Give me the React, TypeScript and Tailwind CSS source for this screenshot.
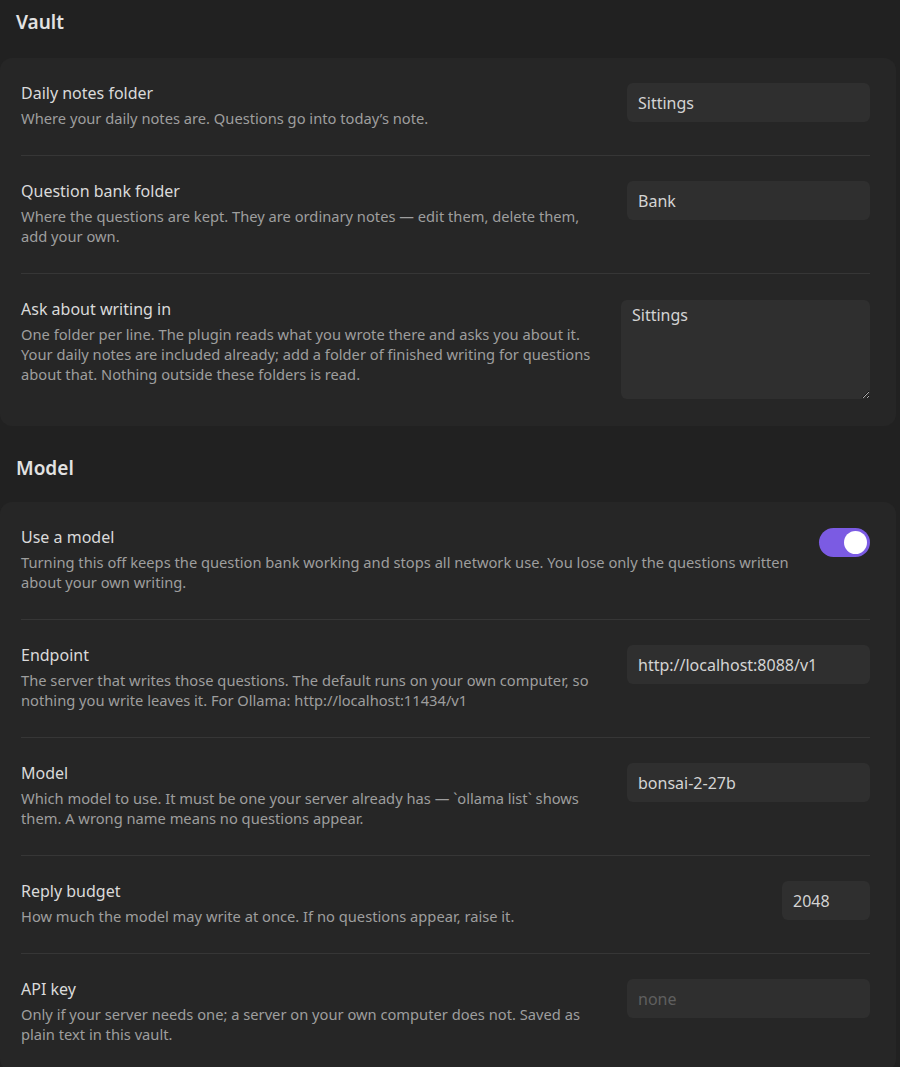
import React from 'react';

type Control =
  | { kind: 'text'; value?: string; placeholder?: string; width: string }
  | { kind: 'area'; value: string }
  | { kind: 'toggle'; on: boolean };

type Setting = {
  name: string;
  desc: string[];
  control: Control;
};

const sections: { title: string; items: Setting[] }[] = [
  {
    title: 'Vault',
    items: [
      {
        name: 'Daily notes folder',
        desc: ["Where your daily notes are. Questions go into today\u2019s note."],
        control: { kind: 'text', value: 'Sittings', width: 'w-[243px]' },
      },
      {
        name: 'Question bank folder',
        desc: [
          'Where the questions are kept. They are ordinary notes \u2014 edit them, delete them,',
          'add your own.',
        ],
        control: { kind: 'text', value: 'Bank', width: 'w-[243px]' },
      },
      {
        name: 'Ask about writing in',
        desc: [
          'One folder per line. The plugin reads what you wrote there and asks you about it.',
          'Your daily notes are included already; add a folder of finished writing for questions',
          'about that. Nothing outside these folders is read.',
        ],
        control: { kind: 'area', value: 'Sittings' },
      },
    ],
  },
  {
    title: 'Model',
    items: [
      {
        name: 'Use a model',
        desc: [
          'Turning this off keeps the question bank working and stops all network use. You lose only the questions written',
          'about your own writing.',
        ],
        control: { kind: 'toggle', on: true },
      },
      {
        name: 'Endpoint',
        desc: [
          'The server that writes those questions. The default runs on your own computer, so',
          'nothing you write leaves it. For Ollama: http://localhost:11434/v1',
        ],
        control: { kind: 'text', value: 'http://localhost:8088/v1', width: 'w-[243px]' },
      },
      {
        name: 'Model',
        desc: [
          'Which model to use. It must be one your server already has \u2014 `ollama list` shows',
          'them. A wrong name means no questions appear.',
        ],
        control: { kind: 'text', value: 'bonsai-2-27b', width: 'w-[243px]' },
      },
      {
        name: 'Reply budget',
        desc: ['How much the model may write at once. If no questions appear, raise it.'],
        control: { kind: 'text', value: '2048', width: 'w-[88px]' },
      },
      {
        name: 'API key',
        desc: [
          'Only if your server needs one; a server on your own computer does not. Saved as',
          'plain text in this vault.',
        ],
        control: { kind: 'text', placeholder: 'none', width: 'w-[243px]' },
      },
    ],
  },
];

const SettingControl = ({ control }: { control: Control }) => {
  if (control.kind === 'toggle') {
    return (
      <div
        className={`mt-[1px] flex h-[29px] w-[51px] shrink-0 items-center rounded-full p-[3px] ${
          control.on ? 'justify-end bg-[#7b5be3]' : 'justify-start bg-[#3f3f3f]'
        }`}
      >
        <div className="h-[23px] w-[23px] rounded-full bg-white" />
      </div>
    );
  }
  if (control.kind === 'area') {
    return (
      <textarea
        defaultValue={control.value}
        className="mt-[1px] h-[99px] w-[249px] shrink-0 rounded-md bg-[#2f2f2f] px-[11px] py-[4px] text-[16px] leading-[22px] text-[#d4d4d4] outline-none [color-scheme:dark]"
      />
    );
  }
  return (
    <input
      type="text"
      defaultValue={control.value}
      placeholder={control.placeholder}
      className={`h-[39px] shrink-0 rounded-md bg-[#2f2f2f] px-[11px] text-[16px] text-[#d4d4d4] outline-none placeholder:text-[#5f5f5f] ${control.width}`}
    />
  );
};

export default function App() {
  return (
    <div
      className="min-h-screen bg-[#212121] pb-[40px] text-[#dadada]"
      style={{ fontFamily: '"Noto Sans", "Open Sans", sans-serif' }}
    >
      {sections.map((section, si) => (
        <div key={section.title}>
          <h2
            className={`pl-[16px] text-[19px] font-semibold leading-[24px] text-[#e2e2e2] ${
              si === 0 ? 'pt-[10px] pb-[24px]' : 'pt-[30px] pb-[22px]'
            }`}
          >
            {section.title}
          </h2>
          <div className="mr-[4px] rounded-xl bg-[#262626] pl-[21px] pr-[26px]">
            {section.items.map((item, i) => (
              <div
                key={item.name}
                className={`flex items-start gap-[24px] pt-[25px] pb-[27px] ${
                  i > 0 ? 'border-t border-[#363636]' : ''
                }`}
              >
                <div className="min-w-0 flex-1">
                  <div className="text-[16px] leading-[20px] text-[#dadada]">{item.name}</div>
                  <div className="mt-[5px] text-[14.7px] leading-[20px] text-[#9e9e9e]">
                    {item.desc.map((line) => (
                      <div key={line} className="whitespace-nowrap">
                        {line}
                      </div>
                    ))}
                  </div>
                </div>
                <SettingControl control={item.control} />
              </div>
            ))}
          </div>
        </div>
      ))}
    </div>
  );
}
